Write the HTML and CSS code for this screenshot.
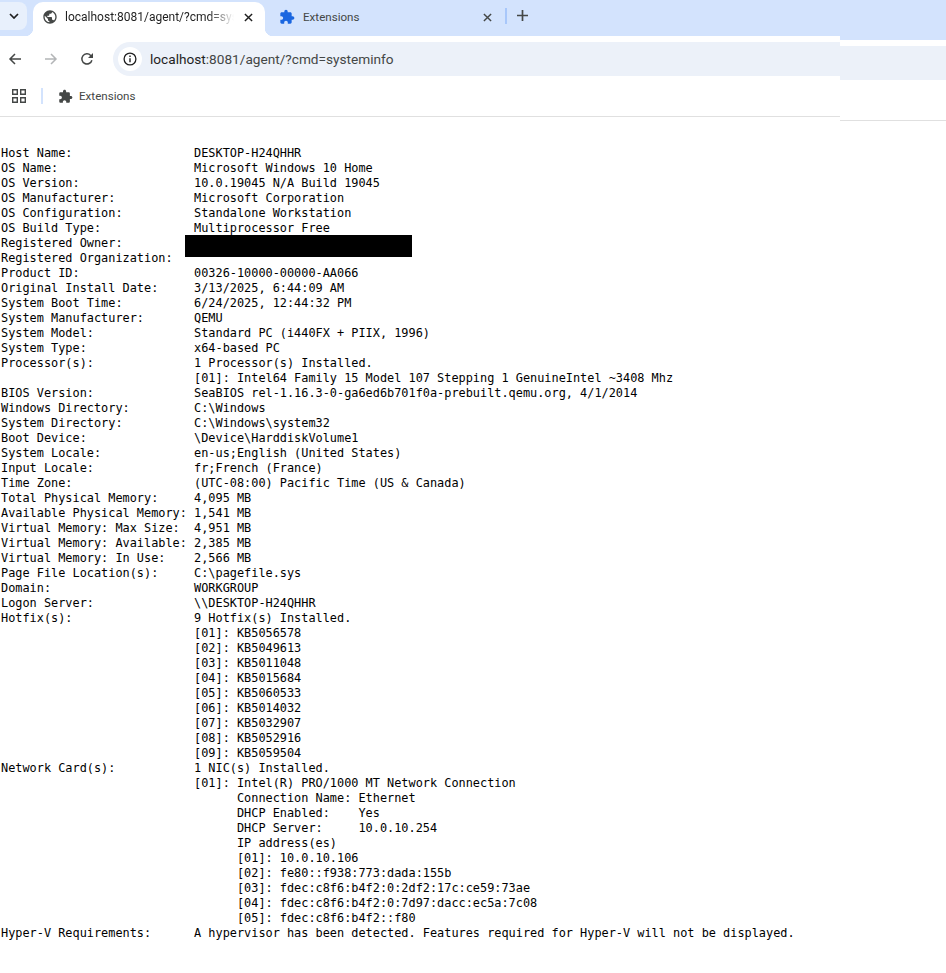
FILE: index.html
```html
<!DOCTYPE html>
<html lang="en">
<head>
<meta charset="utf-8">
<title>localhost:8081/agent/?cmd=systeminfo</title>
<link rel="stylesheet" href="styles.css">
</head>
<body>
<header class="chrome">
  <div class="chrome-main">
    <div class="tabstrip">
      <button class="tab-search" aria-label="Search tabs">
        <svg class="ico-chevron" viewBox="0 0 10 6"><path d="M1 1l4 4 4-4" fill="none" stroke="#1f1f1f" stroke-width="1.7"/></svg>
      </button>
      <div class="tab tab-active">
        <svg class="ico-fav" viewBox="0 0 24 24"><path fill="#444746" d="M12 2C6.48 2 2 6.48 2 12s4.48 10 10 10 10-4.48 10-10S17.52 2 12 2zm-1 17.93c-3.95-.49-7-3.85-7-7.93 0-.62.08-1.21.21-1.79L9 15v1c0 1.1.9 2 2 2v1.93zm6.9-2.54c-.26-.81-1-1.39-1.9-1.39h-1v-3c0-.55-.45-1-1-1H8v-2h2c.55 0 1-.45 1-1V7h2c1.1 0 2-.9 2-2v-.41c2.93 1.19 5 4.06 5 7.41 0 2.08-.8 3.97-2.1 5.39z"/></svg>
        <span class="tab-title tab-title-fade">localhost:8081/agent/?cmd=systeminfo</span>
        <svg class="ico-close" viewBox="0 0 10 10"><path d="M1 1l8 8M9 1l-8 8" stroke="#1f1f1f" stroke-width="1.6" fill="none"/></svg>
      </div>
      <div class="tab tab-idle">
        <svg class="ico-fav" viewBox="0 0 24 24"><path fill="#1a66e0" d="M20.5 11H19V7c0-1.1-.9-2-2-2h-4V3.5C13 2.12 11.88 1 10.5 1S8 2.12 8 3.5V5H4c-1.1 0-1.99.9-1.99 2v3.8H3.5c1.49 0 2.7 1.21 2.7 2.7s-1.21 2.7-2.7 2.7H2V20c0 1.1.9 2 2 2h3.8v-1.5c0-1.49 1.21-2.7 2.7-2.7 1.49 0 2.7 1.21 2.7 2.7V22H17c1.1 0 2-.9 2-2v-4h1.5c1.38 0 2.5-1.12 2.5-2.5S21.88 11 20.5 11z"/></svg>
        <span class="tab-title tab-title-idle">Extensions</span>
        <svg class="ico-close" viewBox="0 0 10 10"><path d="M1 1l8 8M9 1l-8 8" stroke="#444746" stroke-width="1.6" fill="none"/></svg>
      </div>
      <span class="tab-sep"></span>
      <svg class="ico-plus" viewBox="0 0 11 11"><path d="M5.5 0v11M0 5.5h11" stroke="#444746" stroke-width="1.7" fill="none"/></svg>
    </div>
    <div class="toolbar">
      <svg class="ico-nav ico-back" viewBox="0 0 14 14"><path d="M13 7H2M7 2L2 7l5 5" fill="none" stroke="#444746" stroke-width="1.5"/></svg>
      <svg class="ico-nav ico-forward" viewBox="0 0 14 14"><path d="M1 7h11M7 2l5 5-5 5" fill="none" stroke="#b3b5b7" stroke-width="1.5"/></svg>
      <svg class="ico-nav ico-reload" viewBox="0 0 14 14"><path d="M11.9 8.2A5.1 5.1 0 1 1 10.7 3.4L12.4 5" fill="none" stroke="#444746" stroke-width="1.5"/><path d="M13 1v5H8z" fill="#444746"/></svg>
      <div class="omnibox omnibox-start">
        <span class="site-info">
          <svg class="ico-info" viewBox="0 0 14 14"><circle cx="7" cy="7" r="5.9" fill="none" stroke="#1f1f1f" stroke-width="1.3"/><path d="M7 6.2v4" stroke="#1f1f1f" stroke-width="1.4"/><path d="M7 3.6v1.5" stroke="#1f1f1f" stroke-width="1.4"/></svg>
        </span>
        <span class="url"><span class="url-host">localhost</span>:8081/agent/?cmd=systeminfo</span>
      </div>
    </div>
    <div class="bookmarks">
      <svg class="ico-apps" viewBox="0 0 14 14"><path fill="none" stroke="#444746" stroke-width="1.4" d="M.7.7h4.6v4.6H.7zM8.7.7h4.6v4.6H8.7zM.7 8.7h4.6v4.6H.7zM8.7 8.7h4.6v4.6H8.7z"/></svg>
      <span class="bm-sep"></span>
      <svg class="ico-bm" viewBox="0 0 24 24"><path fill="#444746" d="M20.5 11H19V7c0-1.1-.9-2-2-2h-4V3.5C13 2.12 11.88 1 10.5 1S8 2.12 8 3.5V5H4c-1.1 0-1.99.9-1.99 2v3.8H3.5c1.49 0 2.7 1.21 2.7 2.7s-1.21 2.7-2.7 2.7H2V20c0 1.1.9 2 2 2h3.8v-1.5c0-1.49 1.21-2.7 2.7-2.7 1.49 0 2.7 1.21 2.7 2.7V22H17c1.1 0 2-.9 2-2v-4h1.5c1.38 0 2.5-1.12 2.5-2.5S21.88 11 20.5 11z"/></svg>
      <span class="bm-label">Extensions</span>
    </div>
  </div>
  <div class="chrome-side">
    <div class="side-strip"></div>
    <div class="side-omni"></div>
    <div class="side-rest"></div>
  </div>
</header>
<main class="page">
<div class="redaction"></div>
<pre class="output">Host Name:                 DESKTOP-H24QHHR
OS Name:                   Microsoft Windows 10 Home
OS Version:                10.0.19045 N/A Build 19045
OS Manufacturer:           Microsoft Corporation
OS Configuration:          Standalone Workstation
OS Build Type:             Multiprocessor Free
Registered Owner:
Registered Organization:
Product ID:                00326-10000-00000-AA066
Original Install Date:     3/13/2025, 6:44:09 AM
System Boot Time:          6/24/2025, 12:44:32 PM
System Manufacturer:       QEMU
System Model:              Standard PC (i440FX + PIIX, 1996)
System Type:               x64-based PC
Processor(s):              1 Processor(s) Installed.
                           [01]: Intel64 Family 15 Model 107 Stepping 1 GenuineIntel ~3408 Mhz
BIOS Version:              SeaBIOS rel-1.16.3-0-ga6ed6b701f0a-prebuilt.qemu.org, 4/1/2014
Windows Directory:         C:\Windows
System Directory:          C:\Windows\system32
Boot Device:               \Device\HarddiskVolume1
System Locale:             en-us;English (United States)
Input Locale:              fr;French (France)
Time Zone:                 (UTC-08:00) Pacific Time (US &amp; Canada)
Total Physical Memory:     4,095 MB
Available Physical Memory: 1,541 MB
Virtual Memory: Max Size:  4,951 MB
Virtual Memory: Available: 2,385 MB
Virtual Memory: In Use:    2,566 MB
Page File Location(s):     C:\pagefile.sys
Domain:                    WORKGROUP
Logon Server:              \\DESKTOP-H24QHHR
Hotfix(s):                 9 Hotfix(s) Installed.
                           [01]: KB5056578
                           [02]: KB5049613
                           [03]: KB5011048
                           [04]: KB5015684
                           [05]: KB5060533
                           [06]: KB5014032
                           [07]: KB5032907
                           [08]: KB5052916
                           [09]: KB5059504
Network Card(s):           1 NIC(s) Installed.
                           [01]: Intel(R) PRO/1000 MT Network Connection
                                 Connection Name: Ethernet
                                 DHCP Enabled:    Yes
                                 DHCP Server:     10.0.10.254
                                 IP address(es)
                                 [01]: 10.0.10.106
                                 [02]: fe80::f938:773:dada:155b
                                 [03]: fdec:c8f6:b4f2:0:2df2:17c:ce59:73ae
                                 [04]: fdec:c8f6:b4f2:0:7d97:dacc:ec5a:7c08
                                 [05]: fdec:c8f6:b4f2::f80
Hyper-V Requirements:      A hypervisor has been detected. Features required for Hyper-V will not be displayed.</pre>
</main>
</body>
</html>
```

FILE: styles.css
```css
* { box-sizing: border-box; }

html, body {
  margin: 0;
  padding: 0;
  background: #fff;
}

body {
  width: 946px;
  height: 973px;
  overflow: hidden;
}

/* Browser frame: the captured frame is split in two parts, offset by 4px */
.chrome {
  display: flex;
  align-items: flex-start;
  font-family: Roboto, "Open Sans", sans-serif;
}

.chrome-main {
  width: 840px;
  height: 117px;
  border-bottom: 1px solid #e0e0e0;
}

.chrome-side {
  flex: 1;
  height: 121px;
  border-bottom: 1px solid #e0e0e0;
}

.side-strip {
  height: 40px;
  background: #d3e3fd;
}

.side-omni {
  height: 34px;
  margin-top: 6px;
  background: #ecf1f9;
}

/* Tab strip */
.tabstrip {
  height: 36px;
  background: #d3e3fd;
  display: flex;
  align-items: flex-start;
  padding-top: 2px;
}

.tab-search {
  width: 27px;
  height: 28px;
  margin: 0 6px 0 0;
  padding: 0;
  border: 0;
  border-radius: 0 8px 8px 0;
  background: #e8f0fc;
  display: flex;
  align-items: center;
  justify-content: center;
}

.ico-chevron {
  width: 10px;
  height: 6px;
}

.tab {
  position: relative;
  height: 34px;
  display: flex;
  align-items: center;
  padding: 0 12px 4px 0;
}

.tab-active {
  width: 232px;
  background: #fff;
  border-radius: 10px 10px 0 0;
  padding-left: 9px;
}

.tab-active::before,
.tab-active::after {
  content: "";
  position: absolute;
  bottom: 0;
  width: 8px;
  height: 8px;
}

.tab-active::before {
  left: -8px;
  background: radial-gradient(circle at 0 0, #d3e3fd 8px, #fff 8.5px);
}

.tab-active::after {
  right: -8px;
  background: radial-gradient(circle at 100% 0, #d3e3fd 8px, #fff 8.5px);
}

.tab-idle {
  width: 241px;
  padding-left: 14px;
  padding-right: 14px;
}

.ico-fav {
  width: 16px;
  height: 16px;
  flex: none;
}

.tab-title {
  flex: 1;
  min-width: 0;
  margin-left: 7px;
  font-size: 12px;
  line-height: 16px;
  white-space: nowrap;
  overflow: hidden;
  color: #1f1f1f;
}

.tab-title-fade {
  -webkit-mask-image: linear-gradient(to right, #000 85%, transparent 100%);
  mask-image: linear-gradient(to right, #000 85%, transparent 100%);
  margin-right: 10px;
}

.tab-title-idle {
  color: #444746;
  margin-left: 8px;
  font-size: 11.6px;
}

.ico-close {
  width: 9px;
  height: 9px;
  flex: none;
}

.tab-sep {
  width: 2px;
  height: 16px;
  margin: 6px 0 0 -1px;
  background: #a8c7fa;
}

.ico-plus {
  width: 11px;
  height: 11px;
  margin: 8px 0 0 10px;
}

/* Toolbar */
.toolbar {
  height: 34px;
  margin-top: 6px;
  display: flex;
  align-items: center;
}

.ico-nav {
  width: 14px;
  height: 14px;
  flex: none;
}

.ico-back { margin-left: 8px; }
.ico-forward { margin-left: 22px; }
.ico-reload { margin-left: 22px; }

.omnibox {
  flex: 1;
  height: 34px;
  margin-left: 19px;
  background: #ecf1f9;
  border-radius: 17px 0 0 17px;
  display: flex;
  align-items: center;
  padding-left: 5px;
}

.site-info {
  width: 24px;
  height: 24px;
  border-radius: 50%;
  background: #fff;
  display: flex;
  align-items: center;
  justify-content: center;
}

.ico-info {
  width: 14px;
  height: 14px;
}

.url {
  margin-left: 8px;
  font-size: 13.65px;
  color: #444746;
  white-space: nowrap;
}

.url-host { color: #1f1f1f; }

/* Bookmarks bar */
.bookmarks {
  height: 40px;
  display: flex;
  align-items: center;
  padding-left: 12px;
}

.ico-apps {
  width: 14px;
  height: 14px;
}

.bm-sep {
  width: 2px;
  height: 16px;
  margin-left: 15px;
  background: #d3e3fd;
}

.ico-bm {
  width: 15px;
  height: 15px;
  margin-left: 15px;
}

.bm-label {
  margin-left: 6px;
  font-size: 11.6px;
  color: #444746;
}

/* Command output */
.page {
  position: relative;
  padding: 25px 0 0 1px;
}

.output {
  margin: 0;
  font-family: "DejaVu Sans Mono", "Liberation Mono", monospace;
  font-size: 11.88px;
  line-height: 15px;
  color: #000;
}

.redaction {
  position: absolute;
  left: 185px;
  top: 114px;
  width: 227px;
  height: 22px;
  background: #000;
}
```
